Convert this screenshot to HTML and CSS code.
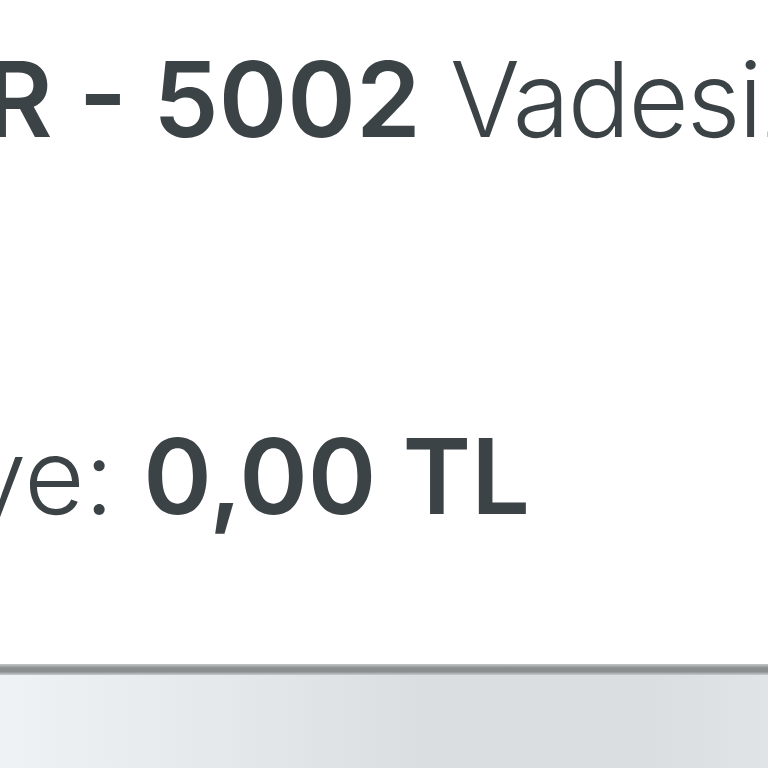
FILE: index.html
```html
<!DOCTYPE html>
<html>
<head>
<meta charset="utf-8">
<link rel="stylesheet" href="styles.css">
</head>
<body>
<div class="card">
  <div class="line acct"><span class="bold">TR - 5002</span> <span class="light tight">Vadesiz Hesap</span></div>
  <div class="line bal"><span class="light">Kullanılabilir Bakiye:</span> <span class="bold">0,00 TL</span></div>
</div>
<div class="divider"></div>
<div class="footer"></div>
</body>
</html>
```
FILE: styles.css
```css
html, body {
  margin: 0;
  padding: 0;
  background: #ffffff;
  overflow: hidden;
}
.card {
  height: 664px;
  padding-top: 45px;
  box-sizing: border-box;
  display: flex;
  flex-direction: column;
  gap: 269px;
  overflow: hidden;
}
.line {
  font-family: Inter, "Open Sans", "Liberation Sans", sans-serif;
  font-size: 104px;
  line-height: 108px;
  color: #3c4346;
  white-space: nowrap;
}
.acct {
  margin-left: -84px;
}
.bal {
  margin-left: -835px;
}
.bold {
  font-weight: 600;
}
.light {
  font-weight: 300;
}
.tight {
  letter-spacing: -2px;
}
.divider {
  height: 11px;
  background: linear-gradient(to bottom, #c6c9c9 0%, #8b8f8f 35%, #8b8f8f 70%, #c9cccc 100%);
}
.footer {
  height: 93px;
  background: linear-gradient(to right, #eef2f4 0%, #e4e8ea 30%, #dadee1 55%, #dadee1 85%, #e0e4e6 100%);
}
```
